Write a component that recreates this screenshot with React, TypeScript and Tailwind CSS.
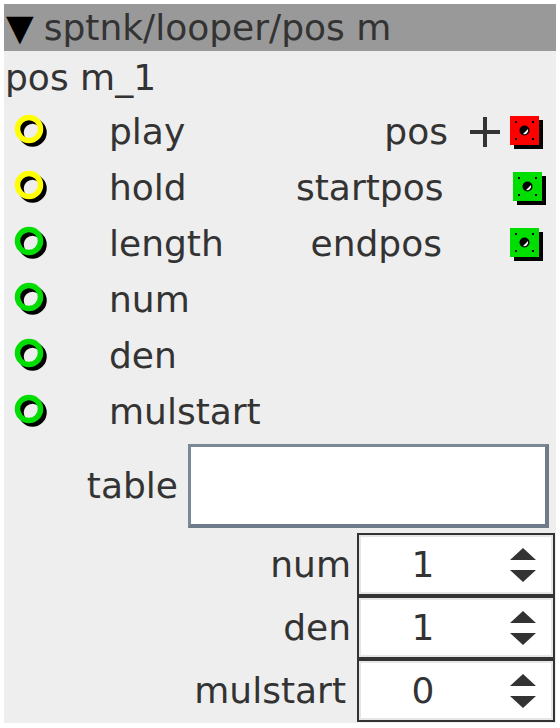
import React from 'react';

const font = { fontFamily: '"DejaVu Sans", sans-serif' };

function Inlet({ color }: { color: string }) {
  return (
    <svg width="40" height="40" viewBox="0 0 40 40">
      <circle cx="18.5" cy="18.5" r="11.5" fill="none" stroke="#000" strokeWidth="5.5" />
      <circle cx="15" cy="15" r="11.5" fill="none" stroke={color} strokeWidth="5.5" />
    </svg>
  );
}

function Outlet({ color }: { color: string }) {
  return (
    <svg width="36" height="36" viewBox="0 0 36 36">
      <rect x="4" y="4" width="29" height="29" fill="#000" />
      <rect x="0" y="0" width="29" height="29" fill={color} />
      <circle cx="14.5" cy="14.5" r="5" fill="#000" />
      <path d="M13 18 A4 4 0 0 0 18 13 Z" fill="#fff" />
      <rect x="5" y="5" width="2" height="2" fill="#000" />
      <rect x="22" y="5" width="2" height="2" fill="#000" />
      <rect x="5" y="22" width="2" height="2" fill="#000" />
      <rect x="22" y="22" width="2" height="2" fill="#000" />
    </svg>
  );
}

function Plus() {
  return (
    <svg width="32" height="32" viewBox="0 0 32 32">
      <path d="M1 16 H31 M16 1 V31" stroke="#333" strokeWidth="4" />
    </svg>
  );
}

const inlets = [
  { name: 'play', color: '#ffff00' },
  { name: 'hold', color: '#ffff00' },
  { name: 'length', color: '#00dd00' },
  { name: 'num', color: '#00dd00' },
  { name: 'den', color: '#00dd00' },
  { name: 'mulstart', color: '#00dd00' },
];

const outlets = [
  { name: 'pos', color: '#ff0000', plus: true, pad: 'pr-0' },
  { name: 'startpos', color: '#00dd00', plus: false, pad: 'pr-[12px]' },
  { name: 'endpos', color: '#00dd00', plus: false, pad: 'pr-[6px]' },
];

function Spinner({ label, value, pad }: { label: string; value: string; pad: string }) {
  return (
    <div className="flex items-center">
      <div className={`flex-1 text-right ${pad}`}>{label}</div>
      <div className="w-[198px] h-[63px] border-2 border-[#333333] bg-white flex">
        <div className="flex-1 border-2 border-[#e6e6e6] flex items-center">
          <div className="w-[124px] text-center">{value}</div>
          <svg width="28" height="40" viewBox="0 0 28 40" className="ml-[24px]">
            <path d="M1 15 L14 3 L27 15 Z" fill="#333" />
            <path d="M1 25 L27 25 L14 37 Z" fill="#333" />
          </svg>
        </div>
      </div>
    </div>
  );
}

export default function App() {
  return (
    <div className="bg-white p-1 w-[560px] h-[728px]" style={font}>
      <div className="bg-[#eeeeee] w-[552px] text-[36px] text-[#333333] leading-none pb-[1px]">
        {/* header */}
        <div className="bg-[#999999] h-[47px] flex items-center pl-[2px] text-[#333333]">
          <span className="text-[#000] text-[36px] mr-[10px]">▼</span>
          <span>sptnk/looper/pos m</span>
        </div>
        <div className="h-[53px] flex items-center pl-[1px]">pos m_1</div>

        {/* inlets and outlets */}
        <div className="flex">
          <div className="flex-1">
            {inlets.map((i) => (
              <div key={i.name} className="h-[56px] flex items-center">
                <div className="w-[105px] pl-[10px] pt-[4px]">
                  <Inlet color={i.color} />
                </div>
                <span>{i.name}</span>
              </div>
            ))}
          </div>
          <div className="w-[260px]">
            {outlets.map((o) => (
              <div key={o.name} className="h-[56px] flex items-center justify-end">
                <span className={o.pad}>{o.name}</span>
                <span className="w-[62px] flex items-center justify-end pr-[9px]">
                  {o.plus ? <Plus /> : null}
                </span>
                <div className="w-[46px] pt-[4px]">
                  <Outlet color={o.color} />
                </div>
              </div>
            ))}
          </div>
        </div>

        {/* table */}
        <div className="flex items-center mt-[4px]">
          <div className="w-[184px] text-right pr-[10px]">table</div>
          <div className="w-[361px] h-[84px] bg-white border-t-[3px] border-l-[3px] border-b-[4px] border-r-[4px] border-t-[#7b8896] border-l-[#7b8896] border-b-[#6e7c8a] border-r-[#6e7c8a]" />
        </div>

        {/* spinners */}
        <div className="mt-[5px] pr-[1px]">
          <Spinner label="num" value="1" pad="pr-[6px]" />
          <Spinner label="den" value="1" pad="pr-[6px]" />
          <Spinner label="mulstart" value="0" pad="pr-[11px]" />
        </div>
      </div>
    </div>
  );
}
